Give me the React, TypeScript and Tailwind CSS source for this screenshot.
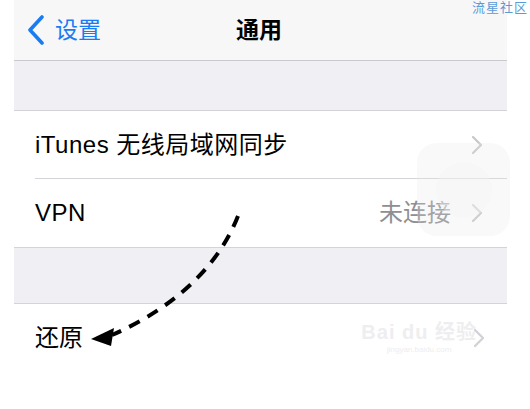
import React from 'react';

const font = { fontFamily: '"Liberation Sans", "Noto Sans CJK SC", sans-serif' };

const Chevron = ({ className = '' }: { className?: string }) => (
  <svg width="12" height="20" viewBox="0 0 12 20" className={className}>
    <path d="M2 2 L10 10 L2 18" fill="none" stroke="#c7c7cc" strokeWidth="2.2" strokeLinecap="round" strokeLinejoin="round" />
  </svg>
);

const Row = ({ label, value, border }: { label: string; value?: string; border?: boolean }) => (
  <div className="h-[68px] bg-white pl-[21px] flex flex-col">
    <div className={`flex-1 flex items-center pr-[24px] ${border ? 'border-b border-[#d4d4d8]' : ''}`}>
      <span className="text-[24px] text-black tracking-[0.5px]">{label}</span>
      <span className="ml-auto text-[24px] text-[#8e8e93] mr-[20px]">{value}</span>
      <Chevron />
    </div>
  </div>
);

export default function App() {
  return (
    <div className="relative w-[530px] h-[409px] bg-white overflow-hidden" style={font}>
      <div className="ml-[14px] w-[493px]">
        {/* nav bar */}
        <div className="h-[61px] bg-[#f7f7f8] border-b border-[#c9c9ce] flex items-center relative">
          <div className="flex items-center ml-[13px] text-[#1a7cf2]">
            <svg width="18" height="30" viewBox="0 0 18 30">
              <path d="M15 2 L3 15 L15 28" fill="none" stroke="#1a7cf2" strokeWidth="3.6" strokeLinecap="round" strokeLinejoin="round" />
            </svg>
            <span className="ml-[10px] text-[23px]">设置</span>
          </div>
          <span className="absolute left-[222px] text-[23px] font-bold text-black">通用</span>
        </div>
        <div className="h-[50px] bg-[#efeff4] border-b border-[#d4d4d8]" />
        <Row label="iTunes 无线局域网同步" border />
        <div className="border-b border-[#d4d4d8]">
          <Row label="VPN" value="未连接" />
        </div>
        <div className="h-[56px] bg-[#efeff4] border-b border-[#d4d4d8]" />
        <div className="h-[68px] bg-white pl-[21px] flex items-center pr-[22px]">
          <span className="text-[24px] text-black">还原</span>
          <div className="ml-auto flex items-center">
            <div className="flex flex-col items-center mr-[-4px] text-[#eeeef0]">
              <span className="text-[20px] font-bold leading-none tracking-[1px]">Bai du 经验</span>
              <span className="text-[8px] leading-none mt-[4px]">jingyan.baidu.com</span>
            </div>
            <Chevron className="opacity-80" />
          </div>
        </div>
      </div>

      {/* watermark */}
      <span className="absolute right-[2px] top-[-2px] text-[13px] text-[#5b9bd5] tracking-[1px]">流星社区</span>

      {/* assistive touch */}
      <div className="absolute left-[417px] top-[143px] w-[93px] h-[93px] rounded-[20px] bg-[#e6e6e6]/25 flex items-center justify-center">
        <div className="w-[56px] h-[56px] rounded-full bg-[#f4f4f4]/40" />
      </div>

      {/* dashed arrow annotation */}
      <svg className="absolute left-0 top-0" width="530" height="409" viewBox="0 0 530 409">
        <path d="M238 216 C 220 262, 180 305, 112 335" fill="none" stroke="#000" strokeWidth="4" strokeDasharray="12 9" />
        <path d="M91 339 L114 328 L111 346 Z" fill="#000" />
      </svg>
    </div>
  );
}
